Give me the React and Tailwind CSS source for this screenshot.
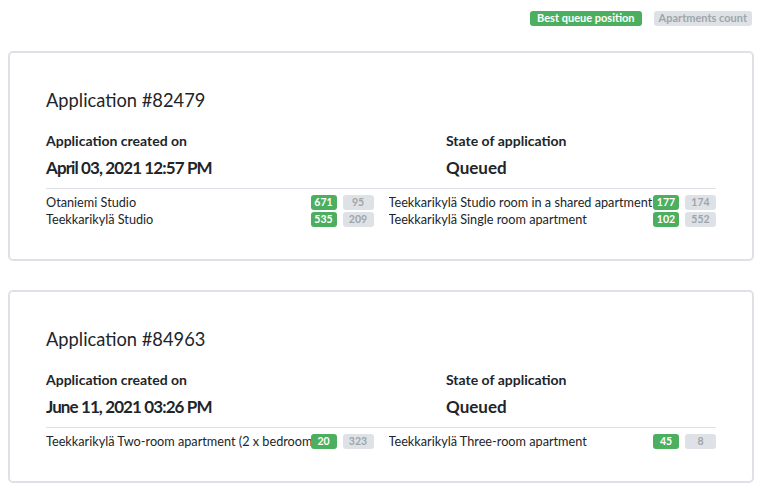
import React from 'react';

const applications = [
    {
        id: 82479,
        created: 'April 03, 2021 12:57 PM',
        state: 'Queued',
        apartments: [
            { name: 'Otaniemi Studio', position: 671, count: 95 },
            { name: 'Teekkarikylä Studio room in a shared apartment', position: 177, count: 174 },
            { name: 'Teekkarikylä Studio', position: 535, count: 209 },
            { name: 'Teekkarikylä Single room apartment', position: 102, count: 552 },
        ],
    },
    {
        id: 84963,
        created: 'June 11, 2021 03:26 PM',
        state: 'Queued',
        apartments: [
            { name: 'Teekkarikylä Two-room apartment (2 x bedroom + living room)', position: 20, count: 323 },
            { name: 'Teekkarikylä Three-room apartment', position: 45, count: 8 },
        ],
    },
];

const ApartmentRow = ({ apartment }) => (
    <div className="flex items-center h-[15px]">
        <span className="flex-1 min-w-0 overflow-hidden whitespace-nowrap text-[12.7px] leading-[15px] text-[#212529]">
            {apartment.name}
        </span>
        <span className="w-[26px] h-[15px] flex items-center justify-center rounded-[3px] bg-[#4caf5f] text-white text-[10.5px] font-bold">
            {apartment.position}
        </span>
        <span className="w-[31px] h-[15px] ml-[6px] flex items-center justify-center rounded-[3px] bg-[#dee2e6] text-[#a0a5aa] text-[10.5px] font-bold">
            {apartment.count}
        </span>
    </div>
);

const ApplicationCard = ({ app }) => (
    <div className="mx-2 border-2 border-[#dee2e6] rounded-[5px] bg-white px-9 pt-[36px] pb-[32px]">
        <h2 className="text-[18.3px] leading-[23px] text-[#212529]">Application #{app.id}</h2>
        <div className="grid grid-cols-[400px_1fr] mt-[21px]">
            <div>
                <div className="text-[14px] leading-[16px] font-bold text-[#212529]">Application created on</div>
                <div className="mt-[9px] text-[17px] leading-[20px] font-bold tracking-[-0.9px] text-[#212529]">{app.created}</div>
            </div>
            <div>
                <div className="text-[14px] leading-[16px] font-bold text-[#212529]">State of application</div>
                <div className="mt-[9px] text-[17px] leading-[20px] font-bold text-[#212529]">{app.state}</div>
            </div>
        </div>
        <div className="mt-[10px] border-t border-[#dee2e6] pt-[6px] grid grid-cols-2 gap-x-[15px] gap-y-[2px]">
            {app.apartments.map((a) => (
                <ApartmentRow key={a.name} apartment={a} />
            ))}
        </div>
    </div>
);

const App = () => {
    return (
        <div className="min-h-screen bg-white pb-4" style={{ fontFamily: 'Lato, "Noto Sans", sans-serif' }}>
            <div className="flex justify-end gap-3 pt-[11px] pr-[10px]">
                <span className="h-[15px] px-[7px] flex items-center rounded-[3px] bg-[#4caf5f] text-white text-[11px] font-bold">
                    Best queue position
                </span>
                <span className="h-[15px] px-[5px] flex items-center rounded-[3px] bg-[#dee2e6] text-[#a0a5aa] text-[11px] font-bold">
                    Apartments count
                </span>
            </div>
            <div className="mt-[25px] flex flex-col gap-[29px]">
                {applications.map((app) => (
                    <ApplicationCard key={app.id} app={app} />
                ))}
            </div>
        </div>
    );
};

export default App;
